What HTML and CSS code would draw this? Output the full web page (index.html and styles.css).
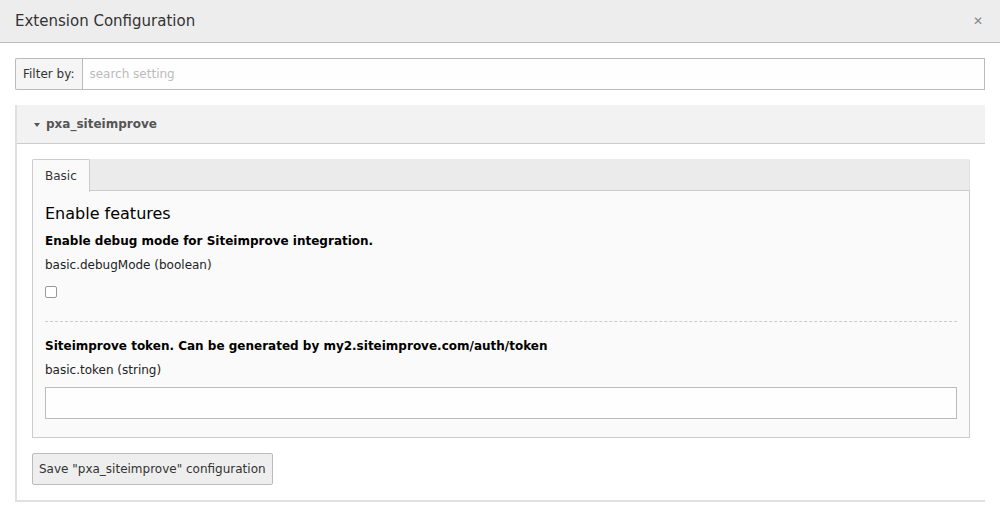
FILE: index.html
```html
<!DOCTYPE html>
<html>
<head>
<meta charset="utf-8">
<link rel="stylesheet" href="styles.css">
</head>
<body>
<div class="modal">
  <div class="modal-header">
    <h4 class="modal-title">Extension Configuration</h4>
    <span class="close">&#x2715;</span>
  </div>
  <div class="modal-body">
    <div class="input-group">
      <span class="addon">Filter by:</span>
      <input class="filter" type="text" placeholder="search setting">
    </div>
    <div class="panel">
      <div class="panel-heading"><span class="caret"></span>pxa_siteimprove</div>
      <div class="panel-body">
        <div class="tabs">
          <div class="tab active">Basic</div>
        </div>
        <div class="tab-content">
          <h3 class="section">Enable features</h3>
          <div class="field">
            <div class="label">Enable debug mode for Siteimprove integration.</div>
            <div class="key">basic.debugMode (boolean)</div>
            <input type="checkbox" class="check">
          </div>
          <div class="field last">
            <div class="label">Siteimprove token. Can be generated by my2.siteimprove.com/auth/token</div>
            <div class="key">basic.token (string)</div>
            <input type="text" class="text">
          </div>
        </div>
        <button class="btn">Save "pxa_siteimprove" configuration</button>
      </div>
    </div>
  </div>
</div>
</body>
</html>
```

FILE: styles.css
```css
* { box-sizing: border-box; }
html, body { margin: 0; padding: 0; background: #fff; }
body { font-family: "DejaVu Sans", Verdana, sans-serif; font-size: 12px; color: #000; }
.modal { width: 1000px; height: 521px; }
.modal-header {
  height: 43px;
  background: #ededed;
  border-bottom: 1px solid #bbb;
  display: flex;
  align-items: center;
  justify-content: space-between;
  padding: 0 17px 0 15px;
}
.modal-title { margin: 0; font-weight: normal; font-size: 15px; color: #333; }
.close { color: #888; font-size: 12px; font-weight: bold; }
.modal-body { padding: 15px 15px 0 15px; }
.input-group { display: flex; height: 32px; }
.addon {
  background: #f5f5f5;
  border: 1px solid #bbb;
  border-right: 0;
  padding: 0 8px 0 7px;
  display: flex; align-items: center;
  font-size: 12px; color: #333;
  border-radius: 2px 0 0 2px;
}
.filter {
  flex: 1;
  border: 1px solid #bbb;
  background: #fefefe;
  font: 12px "DejaVu Sans", Verdana, sans-serif;
  padding: 0 6px;
  outline: none;
}
.filter::placeholder { color: #bbb; }
.panel {
  margin-top: 15px;
  border-left: 2px solid #e0e0e0;
  border-bottom: 2px solid #e0e0e0;
}
.panel-heading {
  height: 39px;
  background: #f2f2f2;
  border-bottom: 1px solid #ccc;
  display: flex; align-items: center;
  padding-left: 17px;
  font-weight: bold; color: #555; font-size: 12px;
}
.caret {
  width: 0; height: 0;
  border-left: 3.5px solid transparent;
  border-right: 3.5px solid transparent;
  border-top: 4px solid #555;
  margin-right: 6px;
  margin-top: 1px;
}
.panel-body { padding: 15px 15px 15px 15px; }
.tabs {
  display: flex;
  background: #ebebeb;
  border-radius: 2px 2px 0 0;
  height: 32px;
  border-right: 1px solid #e0e0e0;
}
.tab {
  padding: 0 12px;
  display: flex; align-items: center;
  font-size: 12px; color: #333;
  background: #fafafa;
  border: 1px solid #ccc;
  border-bottom: 0;
  border-radius: 2px 2px 0 0;
}
.tabs .tab.active { position: relative; z-index: 1; height: 33px; }
.tab-content {
  background: #fafafa;
  border: 1px solid #ccc;
  margin-top: -1px;
  padding: 12px 12px 18px 12px;
}
.section { margin: 0 0 7px 0; font-weight: normal; font-size: 16px; color: #000; line-height: 22px; }
.field { padding-bottom: 15px; border-bottom: 1px dashed #ccc; margin-bottom: 15px; }
.field.last { border-bottom: 0; margin-bottom: 0; padding-bottom: 0; }
.label { font-weight: bold; font-size: 12px; line-height: 18px; margin-bottom: 6px; }
.key { font-size: 12px; line-height: 18px; color: #222; margin-bottom: 8px; }
.check {
  -webkit-appearance: none; appearance: none;
  width: 12px; height: 12px;
  border: 1px solid #999; border-radius: 2px;
  background: #fff;
  margin: 12px 0 8px 0;
  display: block;
}
.text {
  display: block;
  width: 100%;
  height: 32px;
  border: 1px solid #bbb;
  background: #fefefe;
  margin-top: 0;
}
.btn {
  margin-top: 15px;
  height: 32px;
  padding: 0 6px;
  background: #eee;
  border: 1px solid #bbb;
  border-radius: 2px;
  font: 12px "DejaVu Sans", Verdana, sans-serif;
  color: #333;
}
```
